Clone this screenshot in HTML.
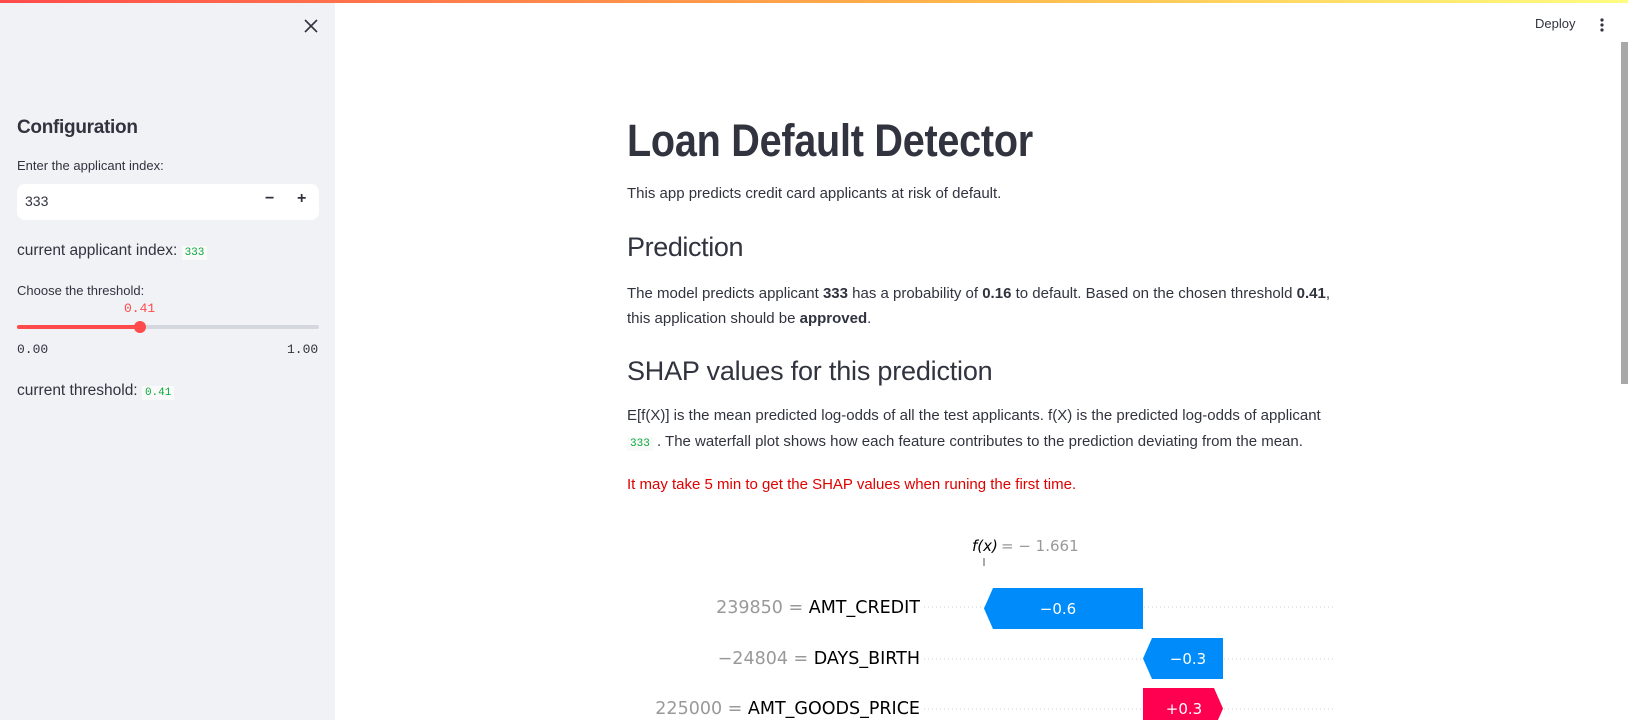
<!DOCTYPE html>
<html><head><meta charset="utf-8"><style>
*{box-sizing:border-box;margin:0;padding:0}
body{width:1628px;height:720px;overflow:hidden;background:#fff;font-family:"Liberation Sans",sans-serif;color:#31333f;position:relative}
.top{position:absolute;left:0;top:0;width:1628px;height:3px;background:linear-gradient(90deg,#ff4b4b,#ffb84b 60%,#fffd80);z-index:5}
.side{position:absolute;left:0;top:0;width:335px;height:720px;background:#f0f2f6}
.a{position:absolute;white-space:nowrap}
.code{font-family:"Liberation Mono",monospace;color:#09ab3b;font-size:11px;background:#fafafa;padding:1px 3px}
p.t{font-size:15px;letter-spacing:0}
</style></head><body>
<div class="top"></div>
<div class="side">
 <svg class="a" style="left:304px;top:19px" width="14" height="14" viewBox="0 0 14 14"><path d="M1 1L13 13M13 1L1 13" stroke="#31333f" stroke-width="1.6"/></svg>
 <div class="a" style="left:17px;top:117px;font-size:19px;font-weight:bold;letter-spacing:-0.3px">Configuration</div>
 <div class="a" style="left:17px;top:158px;font-size:13px;letter-spacing:0">Enter the applicant index:</div>
 <div class="a" style="left:17px;top:184px;width:302px;height:36px;background:#fff;border-radius:8px"></div>
 <div class="a" style="left:25px;top:193px;font-size:14px">333</div>
 <div class="a" style="left:265px;top:190px;font-size:16px;font-weight:bold">−</div>
 <div class="a" style="left:297px;top:190px;font-size:16px;font-weight:bold">+</div>
 <div class="a" style="left:17px;top:242px;font-size:15.5px;letter-spacing:0">current applicant index: <span class="code">333</span></div>
 <div class="a" style="left:17px;top:283px;font-size:13px;letter-spacing:0">Choose the threshold:</div>
 <div class="a" style="left:124px;top:301px;font-size:13px;font-family:'Liberation Mono',monospace;color:#ff4b4b">0.41</div>
 <div class="a" style="left:17px;top:325px;width:302px;height:4px;background:#d5d7de;border-radius:2px"></div>
 <div class="a" style="left:17px;top:325px;width:124px;height:4px;background:#ff4b4b;border-radius:2px"></div>
 <div class="a" style="left:134px;top:321px;width:12px;height:12px;background:#ff4b4b;border-radius:50%"></div>
 <div class="a" style="left:17px;top:342px;font-size:13px;font-family:'Liberation Mono',monospace">0.00</div>
 <div class="a" style="left:287px;top:342px;font-size:13px;font-family:'Liberation Mono',monospace">1.00</div>
 <div class="a" style="left:17px;top:382px;font-size:15.5px;letter-spacing:0">current threshold: <span class="code">0.41</span></div>
</div>
<div class="a" style="left:1535px;top:16px;font-size:13px">Deploy</div>
<svg class="a" style="left:1600px;top:17px" width="4" height="16"><circle cx="2" cy="3" r="1.6" fill="#31333f"/><circle cx="2" cy="8" r="1.6" fill="#31333f"/><circle cx="2" cy="13" r="1.6" fill="#31333f"/></svg>
<div class="a" style="left:1621px;top:42px;width:7px;height:342px;background:#a8a8a8"></div>

<div class="a" style="left:627px;top:115px;font-size:45px;font-weight:bold;transform:scaleX(0.88);transform-origin:left;letter-spacing:-0.3px">Loan Default Detector</div>
<p class="a t" style="left:627px;top:185px">This app predicts credit card applicants at risk of default.</p>
<div class="a" style="left:627px;top:232px;font-size:27px;letter-spacing:-0.4px">Prediction</div>
<p class="a t" style="left:627px;top:285px">The model predicts applicant <b>333</b> has a probability of <b>0.16</b> to default. Based on the chosen threshold <b>0.41</b>,</p>
<p class="a t" style="left:627px;top:310px">this application should be <b>approved</b>.</p>
<div class="a" style="left:627px;top:356px;font-size:27px;letter-spacing:-0.2px">SHAP values for this prediction</div>
<p class="a t" style="left:627px;top:407px">E[f(X)] is the mean predicted log-odds of all the test applicants. f(X) is the predicted log-odds of applicant</p>
<p class="a t" style="left:627px;top:433px"><span class="code">333</span> . The waterfall plot shows how each feature contributes to the prediction deviating from the mean.</p>
<p class="a t" style="left:627px;top:476px;color:#e00000">It may take 5 min to get the SHAP values when runing the first time.</p>

<svg class="a" style="left:600px;top:520px" width="760" height="200" font-family="DejaVu Sans,sans-serif">
 <text x="372" y="31" font-size="15" fill="#000" font-style="italic">f(x)</text>
 <text x="401" y="31" font-size="15" fill="#999">= − 1.661</text>
 <line x1="384" y1="38" x2="384" y2="46" stroke="#555"/>
 <g stroke="#ccc" stroke-dasharray="1 3"><line x1="324" y1="87" x2="734" y2="87"/><line x1="324" y1="139" x2="734" y2="139"/><line x1="324" y1="189" x2="734" y2="189"/></g>
 <path d="M393 68H543V109H393L384 88.5Z" fill="#008bfb"/>
 <text x="458" y="94" font-size="15" fill="#fff" text-anchor="middle">−0.6</text>
 <path d="M552 118H623V159H552L543 138.5Z" fill="#008bfb"/>
 <text x="588" y="144" font-size="15" fill="#fff" text-anchor="middle">−0.3</text>
 <path d="M543 168H614L623 188.5L614 209H543Z" fill="#ff0051"/>
 <text x="584" y="194" font-size="15" fill="#fff" text-anchor="middle">+0.3</text>
 <text x="320" y="93" font-size="17.5" text-anchor="end"><tspan fill="#999">239850 = </tspan><tspan fill="#000">AMT_CREDIT</tspan></text>
 <text x="320" y="144" font-size="17.5" text-anchor="end"><tspan fill="#999">−24804 = </tspan><tspan fill="#000">DAYS_BIRTH</tspan></text>
 <text x="320" y="194" font-size="17.5" text-anchor="end"><tspan fill="#999">225000 = </tspan><tspan fill="#000">AMT_GOODS_PRICE</tspan></text>
</svg>
</body></html>
